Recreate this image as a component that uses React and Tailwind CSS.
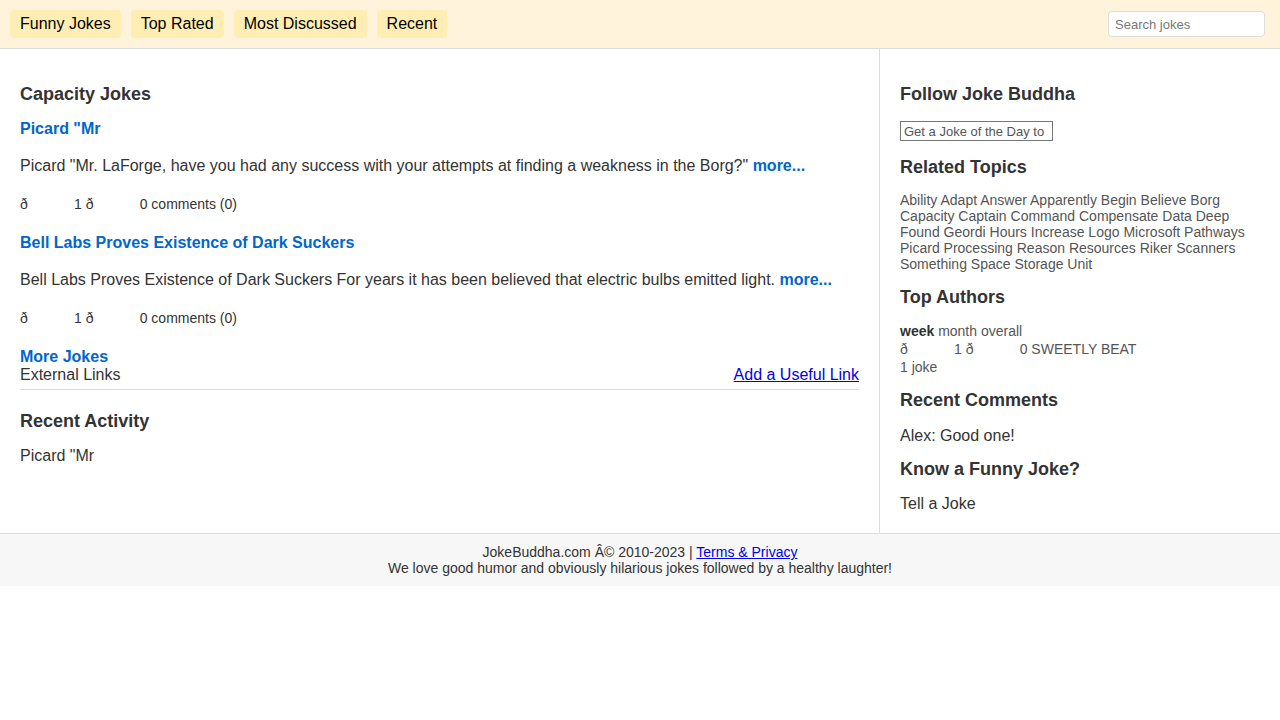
import React from "react";

const navItems = ["Funny Jokes", "Top Rated", "Most Discussed", "Recent"];

const topics = [
  "Ability", "Adapt", "Answer", "Apparently", "Begin", "Believe", "Borg",
  "Capacity", "Captain", "Command", "Compensate", "Data", "Deep",
  "Found", "Geordi", "Hours", "Increase", "Logo", "Microsoft", "Pathways",
  "Picard", "Processing", "Reason", "Resources", "Riker", "Scanners",
  "Something", "Space", "Storage", "Unit",
];

const jokes = [
  {
    title: 'Picard "Mr',
    body: 'Picard "Mr. LaForge, have you had any success with your attempts at finding a weakness in the Borg?"',
  },
  {
    title: "Bell Labs Proves Existence of Dark Suckers",
    body: "Bell Labs Proves Existence of Dark Suckers For years it has been believed that electric bulbs emitted light.",
  },
];

// the broken emoji votes line: "ð  1 ð  0"
function Votes({ up = 1, down = 0 }) {
  return (
    <>
      <span className="inline-block w-[54px]">ð</span>
      {up} <span className="inline-block w-[54px]">ð</span>
      {down}
    </>
  );
}

function JokeItem({ title, body, first }) {
  return (
    <div className={first ? "mt-[15px]" : "mt-[22px]"}>
      <a href="#" className="block text-[16px] leading-[18px] font-bold text-[#0066cc]">
        {title}
      </a>
      <p className="mt-[19px] text-[16px] leading-[18px]">
        {body}{" "}
        <a href="#" className="font-bold text-[#0066cc]">more...</a>
      </p>
      <div className="mt-[21px] text-[14px] leading-[16px] whitespace-pre">
        <Votes /> comments (0)
      </div>
    </div>
  );
}

export default function App() {
  return (
    <div className="font-['Liberation_Sans',Arial,sans-serif] text-[#333] bg-white">
      {/* Top nav */}
      <header className="h-[49px] bg-[#fff3dc] border-b border-[#ddd] flex items-center justify-between pl-[10px] pr-[15px]">
        <nav className="flex gap-[10px]">
          {navItems.map((item) => (
            <a
              key={item}
              href="#"
              className="h-[28px] px-[10px] flex items-center rounded-[4px] bg-[#ffeeb3] text-black text-[16px]"
            >
              {item}
            </a>
          ))}
        </nav>
        <input
          type="text"
          placeholder="Search jokes"
          className="w-[157px] h-[26px] px-[6px] border border-[#ddd] rounded-[4px] bg-white text-[13px] placeholder:text-[#777] outline-none"
        />
      </header>

      {/* Main */}
      <main className="flex">
        <div className="flex-1 border-r border-[#ddd] px-5 pt-[35px] pb-5">
          <h2 className="text-[18px] leading-[21px] font-bold">Capacity Jokes</h2>
          {jokes.map((j, i) => (
            <JokeItem key={j.title} first={i === 0} {...j} />
          ))}
          <a href="#" className="block mt-[22px] text-[16px] leading-[18px] font-bold text-[#0066cc]">
            More Jokes
          </a>
          <div className="flex justify-between text-[16px] leading-[18px] pb-[5px] border-b border-[#ddd]">
            <span>External Links</span>
            <a href="#" className="text-[#0000ee] underline">Add a Useful Link</a>
          </div>
          <h2 className="mt-[21px] text-[18px] leading-[21px] font-bold">Recent Activity</h2>
          <div className="mt-[15px] text-[16px] leading-[18px]">Picard "Mr</div>
        </div>

        {/* Sidebar */}
        <aside className="w-[400px] px-5 pt-[35px] pb-5">
          <h2 className="text-[18px] leading-[21px] font-bold">Follow Joke Buddha</h2>
          <input
            type="text"
            placeholder="Get a Joke of the Day to"
            className="mt-[16px] block w-[153px] h-[20px] px-[3px] border border-[#777] text-[13px] placeholder:text-[#555] outline-none"
          />
          <h2 className="mt-[16px] text-[18px] leading-[21px] font-bold">Related Topics</h2>
          <div className="mt-[14px] text-[14px] leading-[16px] text-[#555]">
            {topics.map((t) => (
              <React.Fragment key={t}>
                <a href="#">{t}</a>{" "}
              </React.Fragment>
            ))}
          </div>
          <h2 className="mt-[15px] text-[18px] leading-[21px] font-bold">Top Authors</h2>
          <div className="mt-[14px] text-[14px] leading-[18px] text-[#555]">
            <div>
              <b className="text-[#333]">week</b> month overall
            </div>
            <div className="whitespace-pre">
              <Votes /> SWEETLY BEAT
            </div>
            <div>1 joke</div>
          </div>
          <h2 className="mt-[14px] text-[18px] leading-[21px] font-bold">Recent Comments</h2>
          <div className="mt-[16px] text-[16px] leading-[18px]">Alex: Good one!</div>
          <h2 className="mt-[14px] text-[18px] leading-[21px] font-bold">Know a Funny Joke?</h2>
          <div className="mt-[15px] text-[16px] leading-[18px]">Tell a Joke</div>
        </aside>
      </main>

      {/* Footer */}
      <footer className="bg-[#f7f7f7] border-t border-[#ddd] text-center text-[14px] leading-[16px] pt-[10px] pb-[10px]">
        <div>
          JokeBuddha.com Â© 2010-2023 | <a href="#" className="text-[#0000ee] underline">Terms &amp; Privacy</a>
        </div>
        <div>We love good humor and obviously hilarious jokes followed by a healthy laughter!</div>
      </footer>
    </div>
  );
}
